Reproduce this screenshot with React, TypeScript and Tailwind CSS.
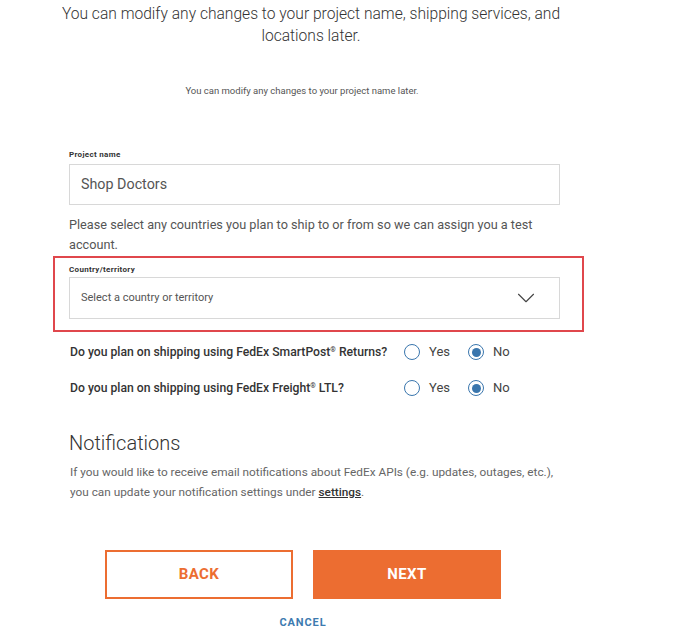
import { ChevronDown } from "lucide-react"

const font = { fontFamily: "Roboto, 'Liberation Sans', sans-serif" }

function Radio({ checked, label }: { checked: boolean; label: string }) {
	return (
		<label className="flex items-center gap-[9px]">
			<span className="flex h-4 w-4 items-center justify-center rounded-full border-[1.5px] border-[#3a76ad] bg-white">
				{checked ? <span className="h-[9px] w-[9px] rounded-full bg-[#3a76ad]" /> : null}
			</span>
			<span className="text-[13px] text-[#444]">{label}</span>
		</label>
	)
}

function Question({ children, yes }: { children: React.ReactNode; yes: boolean }) {
	return (
		<div className="flex h-[20px] items-center">
			<p className="w-[334px] text-[12.2px] font-medium text-[#333]">{children}</p>
			<div className="flex gap-[18px]">
				<Radio checked={yes} label="Yes" />
				<Radio checked={!yes} label="No" />
			</div>
		</div>
	)
}

export default function App() {
	return (
		<div className="flex w-[680px] flex-col bg-white pb-[12px]" style={font}>
			<h1 className="mt-[3px] ml-[59px] w-[504px] text-center text-[15.6px] leading-[22px] font-light text-[#333]">
				You can modify any changes to your project name, shipping services, and locations later.
			</h1>

			<p className="mt-[37px] ml-[20px] w-[564px] text-center text-[9.5px] leading-[14px] text-[#555]">
				You can modify any changes to your project name later.
			</p>

			<div className="mt-[51px] ml-[69px] flex w-[491px] flex-col">
				<label className="text-[8px] leading-[12px] font-bold tracking-[0.04em] text-[#333]">
					Project name
				</label>
				<div className="mt-[3px] flex h-[41px] items-center border border-[#d8d8d8] px-[11px] text-[14.3px] text-[#555]">
					Shop Doctors
				</div>

				<p className="mt-[10px] text-[12.7px] leading-[20px] text-[#555]">
					Please select any countries you plan to ship to or from so we can assign you a test account.
				</p>
			</div>

			<div className="mt-[1px] ml-[53px] w-[531px] border-2 border-[#e0474c] pt-[6px] pr-[22px] pb-[11px] pl-[14px]">
				<label className="block text-[8px] leading-[12px] font-bold tracking-[0.04em] text-[#333]">
					Country/territory
				</label>
				<div className="mt-[1px] flex h-[42px] items-center justify-between border border-[#d8d8d8] pr-[18px] pl-[11px]">
					<span className="text-[11px] text-[#555]">Select a country or territory</span>
					<ChevronDown className="h-[30px] w-[30px] text-[#444]" strokeWidth={0.9} />
				</div>
			</div>

			<div className="mt-[10px] ml-[70px] flex flex-col gap-[16px]">
				<Question yes={false}>
					Do you plan on shipping using FedEx SmartPost<sup className="text-[7px]">®</sup> Returns?
				</Question>
				<Question yes={false}>
					Do you plan on shipping using FedEx Freight<sup className="text-[7px]">®</sup> LTL?
				</Question>
			</div>

			<h2 className="mt-[32px] ml-[69px] text-[20px] leading-[26px] font-light text-[#333]">Notifications</h2>
			<p className="mt-[6px] ml-[70px] w-[492px] text-[11.8px] leading-[20px] text-[#666]">
				If you would like to receive email notifications about FedEx APIs (e.g. updates, outages, etc.), you can update
				your notification settings under <span className="font-medium text-[#333] underline">settings</span>.
			</p>

			<div className="mt-[48px] ml-[105px] flex gap-[20px]">
				<button className="h-[49px] w-[188px] border-2 border-[#ec6d31] bg-white text-[15px] font-bold tracking-[0.03em] text-[#ec6d31]">
					BACK
				</button>
				<button className="h-[49px] w-[188px] bg-[#ec6d31] text-[15px] font-bold tracking-[0.03em] text-white">
					NEXT
				</button>
			</div>

			<button className="mt-[16px] ml-[105px] w-[396px] text-center text-[11px] font-bold tracking-[0.08em] text-[#3d7bb0]">
				CANCEL
			</button>
		</div>
	)
}
